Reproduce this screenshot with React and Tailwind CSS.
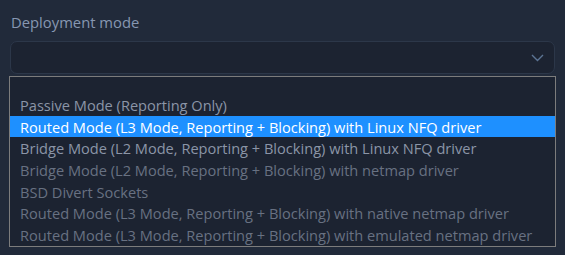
import { useState } from 'react';

const options = [
  { label: '', tone: 'text-[#8b95a7]' },
  { label: 'Passive Mode (Reporting Only)', tone: 'text-[#8b95a7]' },
  { label: 'Routed Mode (L3 Mode, Reporting + Blocking) with Linux NFQ driver', tone: 'text-white' },
  { label: 'Bridge Mode (L2 Mode, Reporting + Blocking) with Linux NFQ driver', tone: 'text-[#8b95a7]' },
  { label: 'Bridge Mode (L2 Mode, Reporting + Blocking) with netmap driver', tone: 'text-[#687182]' },
  { label: 'BSD Divert Sockets', tone: 'text-[#687182]' },
  { label: 'Routed Mode (L3 Mode, Reporting + Blocking) with native netmap driver', tone: 'text-[#687182]' },
  { label: 'Routed Mode (L3 Mode, Reporting + Blocking) with emulated netmap driver', tone: 'text-[#687182]' },
];

function Chevron() {
  return (
    <svg width="13" height="8" viewBox="0 0 13 8" fill="none" className="text-[#5c7494]">
      <path d="M1 1l5.5 5.5L12 1" stroke="currentColor" strokeWidth="1.4" />
    </svg>
  );
}

export default function App() {
  const [selected] = useState(2);

  return (
    <div className="h-[255px] w-[565px] overflow-hidden bg-[#212a3a] px-[9px] pt-[12px] font-['Open_Sans',sans-serif]">
      <label className="ml-[2px] block text-[14.8px] leading-[20px] text-[#8797b1]">Deployment mode</label>
      <div className="mt-[9px] mr-[1px] ml-[1px] flex h-[33px] items-center justify-end rounded-[7px] border border-[#2c3749] bg-[#1c2331] pr-[10px]">
        <Chevron />
      </div>
      <div className="mt-[2px] w-[547px] border border-[#7c7c7c] bg-[#1c2331]">
        {options.map((opt, i) => (
          <div
            key={i}
            className={`${i === 0 ? 'h-[17px]' : 'h-[21.7px]'} flex items-center whitespace-nowrap pl-[10px] text-[14.6px] leading-[22px] ${
              i === selected ? 'bg-[#1e90ff] text-white' : opt.tone
            }`}
          >
            {opt.label}
          </div>
        ))}
      </div>
    </div>
  );
}
